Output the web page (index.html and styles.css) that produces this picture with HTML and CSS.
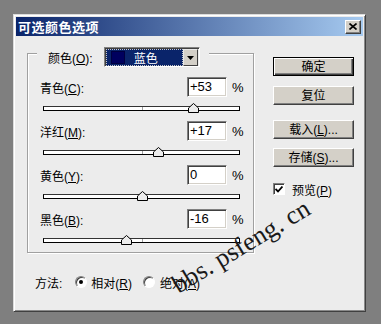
FILE: index.html
```html
<!DOCTYPE html>
<html>
<head>
<meta charset="utf-8">
<link rel="stylesheet" href="styles.css">
</head>
<body>
<div class="dialog">
  <div class="titlebar">
    <span class="title">可选颜色选项</span>
    <span class="close"><svg width="8" height="7" viewBox="0 0 8 7"><path d="M0.5 0.5 L7.5 6.5 M7.5 0.5 L0.5 6.5" stroke="#000" stroke-width="1.6" fill="none"/></svg></span>
  </div>
  <div class="main">
    <div class="group">
      <div class="legend">
        <span class="lbl">颜色(<u>O</u>):</span>
        <div class="select">
          <div class="sel-field">
            <span class="swatch"></span>
            <span class="sel-text">蓝色</span>
          </div>
          <span class="sel-btn"><svg width="7" height="4" viewBox="0 0 7 4"><path d="M0 0 H7 L3.5 4 Z" fill="#000"/></svg></span>
        </div>
      </div>
      <div class="adj first">
        <div class="line"><span class="lbl">青色(<u>C</u>):</span><span class="inp">+53</span><span class="pct">%</span></div>
        <div class="slider"><div class="track"><span class="tick"></span></div><span class="thumb" style="left:145px"><svg width="11" height="10" viewBox="0 0 11 10"><path d="M5.5 0.5 L10.5 5 V9.5 H0.5 V5 Z" fill="#ececec" stroke="#000"/></svg></span></div>
      </div>
      <div class="adj">
        <div class="line"><span class="lbl">洋红(<u>M</u>):</span><span class="inp">+17</span><span class="pct">%</span></div>
        <div class="slider"><div class="track"><span class="tick"></span></div><span class="thumb" style="left:110px"><svg width="11" height="10" viewBox="0 0 11 10"><path d="M5.5 0.5 L10.5 5 V9.5 H0.5 V5 Z" fill="#ececec" stroke="#000"/></svg></span></div>
      </div>
      <div class="adj">
        <div class="line"><span class="lbl">黄色(<u>Y</u>):</span><span class="inp">0</span><span class="pct">%</span></div>
        <div class="slider"><div class="track"><span class="tick"></span></div><span class="thumb" style="left:94px"><svg width="11" height="10" viewBox="0 0 11 10"><path d="M5.5 0.5 L10.5 5 V9.5 H0.5 V5 Z" fill="#ececec" stroke="#000"/></svg></span></div>
      </div>
      <div class="adj">
        <div class="line"><span class="lbl">黑色(<u>B</u>):</span><span class="inp">-16</span><span class="pct">%</span></div>
        <div class="slider"><div class="track"><span class="tick"></span></div><span class="thumb" style="left:78px"><svg width="11" height="10" viewBox="0 0 11 10"><path d="M5.5 0.5 L10.5 5 V9.5 H0.5 V5 Z" fill="#ececec" stroke="#000"/></svg></span></div>
      </div>
    </div>
    <div class="side">
      <div class="btn default">确定</div>
      <div class="btn b2">复位</div>
      <div class="btn b3">载入(<u>L</u>)...</div>
      <div class="btn b4">存储(<u>S</u>)...</div>
      <div class="check-row">
        <span class="checkbox"><svg width="8" height="7" viewBox="0 0 8 7"><path d="M0.5 3 L3 5.5 L7.5 0.5" stroke="#000" stroke-width="1.8" fill="none"/></svg></span>
        <span>预览(<u>P</u>)</span>
      </div>
    </div>
    <div class="method">
      <span class="m-lbl">方法:</span>
      <span class="radio on"></span>
      <span class="r-text">相对(<u>R</u>)</span>
      <span class="radio r2"></span>
      <span class="r-text">绝对(<u>A</u>)</span>
    </div>
  </div>
</div>
<span class="watermark">bbs. psfeng. cn</span>
</body>
</html>
```
FILE: styles.css
```css
body {
  margin: 0;
  width: 381px;
  height: 324px;
  overflow: hidden;
  position: relative;
  background: #7f7f7f;
  font-family: "Liberation Sans", "Noto Sans CJK SC", sans-serif;
  font-size: 12px;
  color: #000;
}

.dialog {
  margin: 14px 0 0 13px;
  width: 353px;
  height: 298px;
  box-sizing: border-box;
  background: #ececec;
  border: 1px solid;
  border-color: #dcdcdc #404040 #404040 #dcdcdc;
  box-shadow: inset 1px 1px 0 #fff, inset -1px -1px 0 #8a8a8a;
  padding: 2px;
}

.titlebar {
  height: 19px;
  background: linear-gradient(to right, #0a246a, #a6caf0);
  display: flex;
  align-items: center;
  justify-content: space-between;
  padding: 0 2px 0 2px;
}

.title {
  color: #fff;
  font-weight: bold;
  font-size: 13px;
  letter-spacing: 0.5px;
  font-family: "Noto Sans CJK SC", sans-serif;
  line-height: 19px;
}

.close {
  width: 16px;
  height: 14px;
  box-sizing: border-box;
  background: #d4d0c8;
  border: 1px solid;
  border-color: #fff #404040 #404040 #fff;
  box-shadow: inset -1px -1px 0 #808080;
  display: flex;
  align-items: center;
  justify-content: center;
}

.main {
  display: grid;
  grid-template-columns: 227px 81px;
  column-gap: 19px;
  padding: 17px 0 0 11px;
}

.group {
  box-sizing: border-box;
  height: 200px;
  border: 1px solid #a0a0a0;
  box-shadow: inset 1px 1px 0 #fff, 1px 1px 0 #fff;
  display: flex;
  flex-direction: column;
}

.legend {
  align-self: flex-start;
  display: flex;
  align-items: center;
  gap: 11px;
  height: 20px;
  margin: -7px 0 0 9px;
  padding: 0 9px 0 11px;
  background: #ececec;
}

.select {
  width: 96px;
  height: 20px;
  box-sizing: border-box;
  border: 1px solid;
  border-color: #808080 #fff #fff #808080;
  box-shadow: inset 1px 1px 0 #404040;
  padding: 1px 1px 0 1px;
  display: flex;
  background: #ececec;
}

.sel-field {
  flex: 1;
  background: #0a246a;
  outline: 1px dotted #c8c8c8;
  outline-offset: -1px;
  display: flex;
  align-items: center;
  padding-left: 5px;
}

.swatch {
  width: 14px;
  height: 13px;
  background: #00005e;
  box-shadow: inset 0 0 0 1px #000040;
}

.sel-text {
  color: #fff;
  font-family: "Noto Sans CJK SC", sans-serif;
  margin-left: 9px;
  line-height: 16px;
}

.sel-btn {
  width: 15px;
  box-sizing: border-box;
  background: #d4d0c8;
  border: 1px solid;
  border-color: #e8e8e8 #404040 #404040 #e8e8e8;
  display: flex;
  align-items: center;
  justify-content: center;
}

.adj {
  height: 44px;
}

.adj.first {
  margin-top: 10px;
}

.line {
  display: flex;
  align-items: center;
  height: 20px;
  padding-left: 12px;
}

.line .lbl {
  flex: 1;
}

.inp {
  width: 40px;
  height: 20px;
  box-sizing: border-box;
  background: #fff;
  border: 1px solid;
  border-color: #808080 #fff #fff #808080;
  box-shadow: inset 1px 1px 0 #404040, inset -1px -1px 0 #d4d0c8;
  font-size: 13px;
  line-height: 18px;
  padding-left: 2px;
}

.pct {
  width: 26px;
  box-sizing: border-box;
  padding-left: 5px;
  font-size: 13px;
}

.slider {
  position: relative;
  height: 24px;
  box-sizing: border-box;
  padding-top: 9px;
  width: 197px;
  margin-left: 15px;
}

.track {
  height: 5px;
  box-sizing: border-box;
  border: 1px solid #000;
  border-top-color: #333;
  background: #fff;
  position: relative;
}

.tick {
  position: absolute;
  left: 98px;
  top: 0;
  width: 1px;
  height: 3px;
  background: #a0a0a0;
}

.thumb {
  position: absolute;
  top: 6px;
  width: 11px;
  height: 10px;
  display: block;
}

.thumb svg {
  display: block;
}

.side {
  display: flex;
  flex-direction: column;
  padding-top: 4px;
}

.btn {
  height: 19px;
  box-sizing: border-box;
  background: #d4d0c8;
  border: 1px solid;
  border-color: #fff #404040 #404040 #fff;
  box-shadow: inset -1px -1px 0 #808080;
  display: flex;
  align-items: center;
  justify-content: center;
  line-height: 16px;
}

.btn.default {
  border: 1px solid #000;
  box-shadow: inset 1px 1px 0 #fff, inset -1px -1px 0 #404040, inset -2px -2px 0 #808080;
}

.b2 { margin-top: 10px; }
.b3 { margin-top: 15px; }
.b4 { margin-top: 9px; }

.check-row {
  margin-top: 16px;
  display: flex;
  align-items: center;
  gap: 7px;
  height: 12px;
}

.checkbox {
  width: 12px;
  height: 12px;
  box-sizing: border-box;
  background: #fff;
  border: 1px solid;
  border-color: #808080 #fff #fff #808080;
  box-shadow: inset 1px 1px 0 #404040;
  display: flex;
  align-items: center;
  justify-content: center;
}

.method {
  grid-column: 1 / 3;
  display: flex;
  align-items: center;
  height: 16px;
  margin: 21px 0 0 8px;
}

.m-lbl {
  margin-right: 13px;
}

.radio {
  width: 12px;
  height: 12px;
  box-sizing: border-box;
  border-radius: 50%;
  background: #fff;
  border: 1px solid;
  border-color: #808080 #fff #fff #808080;
  box-shadow: inset 1px 1px 0 #404040;
  display: flex;
  align-items: center;
  justify-content: center;
  margin-right: 4px;
}

.radio.on::after {
  content: "";
  width: 4px;
  height: 4px;
  border-radius: 50%;
  background: #000;
}

.radio.r2 {
  margin-left: 11px;
  margin-right: 5px;
}

.watermark {
  position: absolute;
  left: 181px;
  top: 272px;
  font-family: "Liberation Serif", serif;
  font-size: 26px;
  line-height: 26px;
  color: #1a1a1a;
  white-space: nowrap;
  transform-origin: 0 100%;
  transform: rotate(-31deg);
}
```
